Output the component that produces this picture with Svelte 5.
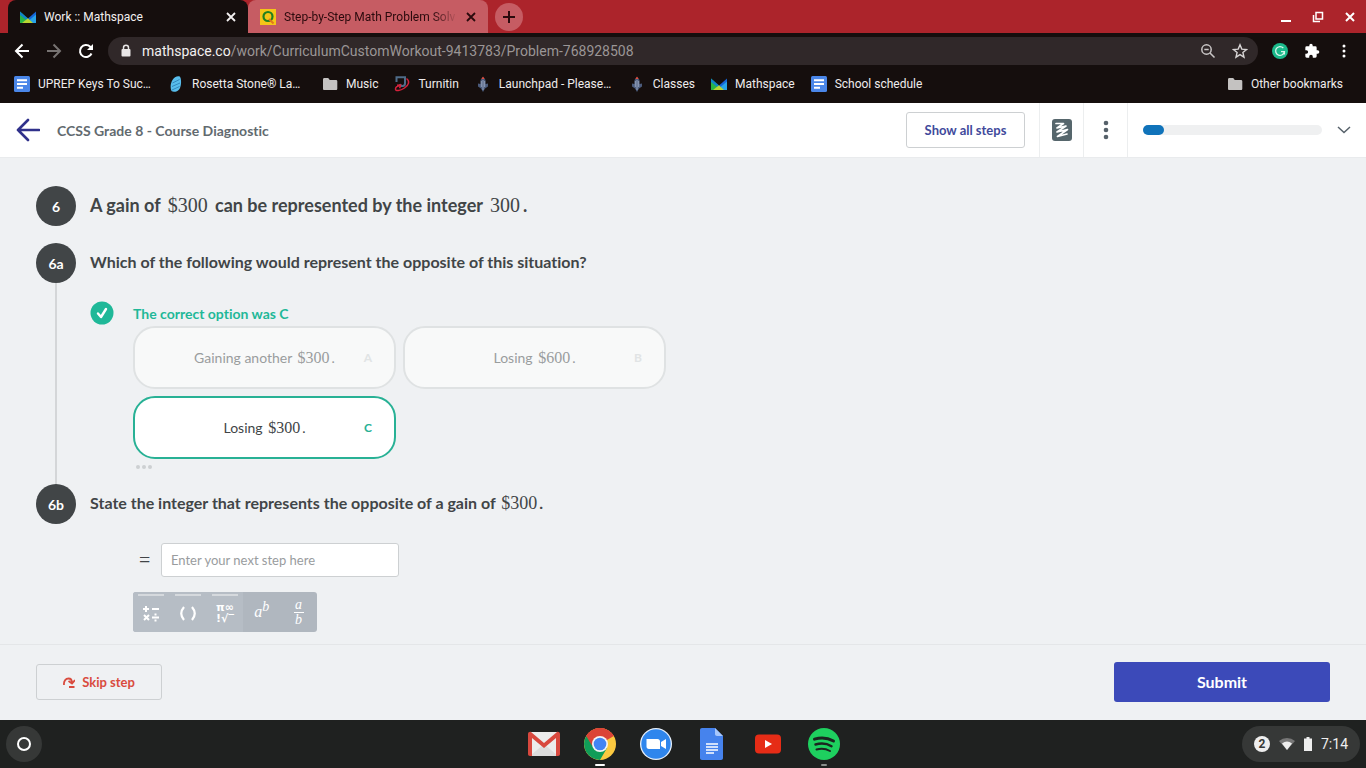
<script lang="ts">
	type IconName = 'docs' | 'rosetta' | 'folder' | 'turnitin' | 'rocket' | 'mathspace';

	interface Bookmark {
		icon: IconName;
		label: string;
		clipped?: boolean;
	}

	interface Option {
		letter: string;
		text: string;
		amount: string;
		correct: boolean;
	}

	const bookmarks: Bookmark[] = [
		{ icon: 'docs', label: 'UPREP Keys To Suc…', clipped: true },
		{ icon: 'rosetta', label: 'Rosetta Stone® La…', clipped: true },
		{ icon: 'folder', label: 'Music' },
		{ icon: 'turnitin', label: 'Turnitin' },
		{ icon: 'rocket', label: 'Launchpad - Please…', clipped: true },
		{ icon: 'rocket', label: 'Classes' },
		{ icon: 'mathspace', label: 'Mathspace' },
		{ icon: 'docs', label: 'School schedule' }
	];

	const options: Option[] = [
		{ letter: 'A', text: 'Gaining another', amount: '$300', correct: false },
		{ letter: 'B', text: 'Losing', amount: '$600', correct: false },
		{ letter: 'C', text: 'Losing', amount: '$300', correct: true }
	];

	let progress = $state(12);
	let answer = $state('');
</script>

{#snippet icon(name: IconName)}
	<svg class="icon16" viewBox="0 0 16 16" aria-hidden="true">
		{#if name === 'docs'}
			<rect width="16" height="16" rx="1.5" fill="#4a86e8" />
			<path d="M3 4.2h10M3 8h10M3 11.8h6" stroke="#fff" stroke-width="2" />
		{:else if name === 'rosetta'}
			<path d="M4.500 4C6 1 10-.5 12 .8c1.500 2 1.500 9-.5 12.200C9.500 16 5 16.500 3.500 15 2 12 2.500 7 4.500 4z" fill="#58bdec" />
			<path d="M4.500 7 11.500 3.500M4 10.500 12 7M4 14l7.500-3.500" stroke="#2878b0" stroke-width=".8" />
		{:else if name === 'folder'}
			<path d="M1 3.500C1 2.700 1.500 2 2.300 2h3.900l1.600 2H14c.8 0 1.300.600 1.300 1.300v7.400c0 .8-.5 1.300-1.300 1.300H2.300C1.500 14 1 13.500 1 12.700z" fill="#c4c2c1" />
		{:else if name === 'turnitin'}
			<path d="M2.500 6V1.200H11V7.500c0 3-4.500 3.500-5 .5" fill="none" stroke="#4f6c89" stroke-width="2" />
			<path d="M12.500 2.500c3.500 2.500 2.500 6.500-2 9.500-4.500 3-9 3.500-9 1 0-1.800 2-3 4.500-3.500M3 9.300l3.500-.3-.8 3.300" fill="none" stroke="#d5213b" stroke-width="1.500" />
		{:else if name === 'rocket'}
			<path d="M8 1 5.500 4v4L3 7.500v3l3 2L8 16l2-3.500 3-2v-3L10.500 8V4z" fill="#4b5b7c" />
			<path d="M6.300 3 8 .5 9.700 3z" fill="#e44c3d" />
			<path d="M8 4v10M6.300 5v6M9.700 5v6" stroke="#a6b3cc" stroke-width=".8" />
		{:else}
			<path d="M0 2.500 8 9.500 4.500 14H0z" fill="#16a34a" />
			<path d="M0 2.500 8 9.500 5.500 12 0 7z" fill="#1283c9" />
			<path d="M0 6v8h4.500L7 11.500z" fill="#28b446" />
			<path d="M16 2.500 8 9.500l4 4.500h4z" fill="#1565d8" />
			<path d="M16 5.500 9.500 11l3 3H16z" fill="#28a3e8" />
			<path d="M2 14 8 9.300l5 4.700z" fill="#b9d532" />
		{/if}
	</svg>
{/snippet}

{#snippet cross()}
	<svg class="cross" viewBox="0 0 10 10" aria-hidden="true">
		<path d="m1 1 8 8M9 1 1 9" fill="none" stroke="currentColor" stroke-width="1.800" />
	</svg>
{/snippet}

{#snippet math(value: string)}
	<span class="math">{value}</span>
{/snippet}

<div class="screen">
	<div class="tabs">
		<div class="tab active">
			{@render icon('mathspace')}
			<span class="tab-title">Work :: Mathspace</span>
			<button class="bare" aria-label="Close tab">{@render cross()}</button>
		</div>
		<div class="tab">
			<svg class="icon16" viewBox="0 0 16 16" aria-hidden="true">
				<rect width="16" height="16" fill="#f5c518" />
				<circle cx="8" cy="7.500" r="4.500" fill="none" stroke="#20801f" stroke-width="2.200" />
				<path d="m9 10 4.500 4.500" stroke="#e2771b" stroke-width="2" />
			</svg>
			<span class="tab-title faded">Step-by-Step Math Problem Solv</span>
			<button class="bare" aria-label="Close tab">{@render cross()}</button>
		</div>
		<button class="new-tab" aria-label="New tab">
			<svg width="12" height="12" viewBox="0 0 12 12"><path d="M6 0v12M0 6h12" stroke="currentColor" stroke-width="2" /></svg>
		</button>
		<div class="window-controls">
			<button class="bare" aria-label="Minimize">
				<svg width="12" height="12" viewBox="0 0 12 12"><path d="M1 10h10" stroke="#fff" stroke-width="2" /></svg>
			</button>
			<button class="bare" aria-label="Restore">
				<svg width="12" height="12" viewBox="0 0 12 12" fill="none" stroke="#fff" stroke-width="1.500"><path d="M4 1.500h6.500V8H4z" /><path d="M1.500 4v6.500H8" /></svg>
			</button>
			<button class="bare" aria-label="Close window">
				<svg width="12" height="12" viewBox="0 0 12 12"><path d="m2 2 8 8M10 2l-8 8" stroke="#fff" stroke-width="2" /></svg>
			</button>
		</div>
	</div>

	<div class="toolbar">
		<button class="bare" aria-label="Back">
			<svg width="16" height="16" viewBox="0 0 16 16" fill="none" stroke="#fff" stroke-width="2"><path d="M15 8H2M8.500 1.500 2 8l6.500 6.500" /></svg>
		</button>
		<button class="bare" aria-label="Forward">
			<svg width="16" height="16" viewBox="0 0 16 16" fill="none" stroke="#777372" stroke-width="2"><path d="M1 8h13M7.500 1.500 14 8l-6.500 6.500" /></svg>
		</button>
		<button class="bare" aria-label="Reload">
			<svg width="16" height="16" viewBox="0 0 16 16"><path d="M13.500 10.500A6 6 0 1 1 12.200 3.800L14 5.600" fill="none" stroke="#fff" stroke-width="2" /><path d="M15 1v6H9z" fill="#fff" /></svg>
		</button>
		<div class="omnibox">
			<svg width="12" height="14" viewBox="0 0 12 14"><path d="M3.500 6V3.700a2.500 2.500 0 0 1 5 0V6" fill="none" stroke="#e8e6e6" stroke-width="1.500" /><rect x="1.500" y="5" width="9" height="7.500" rx="1" fill="#e8e6e6" /></svg>
			<span class="url"><b>mathspace.co</b>/work/CurriculumCustomWorkout-9413783/Problem-768928508</span>
			<button class="bare" aria-label="Zoom">
				<svg width="16" height="16" viewBox="0 0 16 16" fill="none" stroke="#c9c6c6" stroke-width="1.500"><circle cx="6.500" cy="6.500" r="4.700" /><path d="m10 10 4.500 4.500M4.300 6.500h4.400" /></svg>
			</button>
			<button class="bare" aria-label="Bookmark this tab">
				<svg width="16" height="16" viewBox="0 0 16 16"><path d="m8 1.800 1.800 4.300 4.700.4-3.600 3 1.100 4.700-4-2.500-4 2.500 1.100-4.700-3.600-3 4.700-.4z" fill="none" stroke="#d8d5d5" stroke-width="1.400" /></svg>
			</button>
		</div>
		<button class="bare" aria-label="Grammarly">
			<svg width="16" height="16" viewBox="0 0 16 16"><circle cx="8" cy="8" r="8" fill="#1ab98a" /><path d="M11.300 5A4.400 4.400 0 1 0 12.400 8.600H9M12.400 8.600v3" fill="none" stroke="#d7f5ea" stroke-width="1.300" /></svg>
		</button>
		<button class="bare" aria-label="Extensions">
			<svg width="16" height="16" viewBox="0 0 24 24"><path d="M20.500 11H19V7a2 2 0 0 0-2-2h-4V3.500a2.500 2.500 0 0 0-5 0V5H4a2 2 0 0 0-2 2v3.800h1.500a2.700 2.700 0 0 1 0 5.400H2V20a2 2 0 0 0 2 2h3.800v-1.500a2.700 2.700 0 0 1 5.400 0V22H17a2 2 0 0 0 2-2v-4h1.500a2.500 2.500 0 0 0 0-5z" fill="#fff" /></svg>
		</button>
		<button class="bare" aria-label="Menu">
			<svg width="16" height="16" viewBox="0 0 16 16" fill="#fff"><circle cx="8" cy="3" r="1.500" /><circle cx="8" cy="8" r="1.500" /><circle cx="8" cy="13" r="1.500" /></svg>
		</button>
	</div>

	<nav class="bookmarks">
		{#each bookmarks as bookmark}
			<a href="#bookmark">
				{@render icon(bookmark.icon)}
				<span class:clipped={bookmark.clipped}>{bookmark.label}</span>
			</a>
		{/each}
		<a class="other" href="#bookmark">
			{@render icon('folder')}
			<span>Other bookmarks</span>
		</a>
	</nav>

	<header>
		<button class="bare back" aria-label="Back to course">
			<svg width="24" height="24" viewBox="0 0 24 24" fill="none" stroke="#30318b" stroke-width="2.600" stroke-linecap="round" stroke-linejoin="round"><path d="M23 12H2M12 2 2 12l10 10" /></svg>
		</button>
		<h1>CCSS Grade 8 - Course Diagnostic</h1>
		<button class="outline show-steps">Show all steps</button>
		<button class="cell" aria-label="Scratchpad">
			<svg width="22" height="24" viewBox="0 0 22 24"><rect x="1" y="1" width="20" height="22" rx="3" fill="#56666c" /><path d="M5 5.500 12.500 5.500 6 10 15 8 6 14 16.500 11.500 6.500 18.500 16 16" fill="none" stroke="#fff" stroke-width="1.700" stroke-linecap="round" stroke-linejoin="round" /></svg>
		</button>
		<button class="cell" aria-label="More">
			<svg width="6" height="20" viewBox="0 0 6 20" fill="#56616a"><circle cx="3" cy="3" r="2.300" /><circle cx="3" cy="10" r="2.300" /><circle cx="3" cy="17" r="2.300" /></svg>
		</button>
		<div class="progress-cell">
			<div class="track"><div class="fill" style="width: {progress}%"></div></div>
			<button class="bare" aria-label="Expand progress">
				<svg width="14" height="8" viewBox="0 0 14 8"><path d="m1 1 6 5.500L13 1" fill="none" stroke="#56616a" stroke-width="1.500" /></svg>
			</button>
		</div>
	</header>

	<main>
		<section class="step intro">
			<div class="rail"><span class="badge">6</span></div>
			<h2>A gain of {@render math('$300')} can be represented by the integer {@render math('300')}.</h2>
		</section>

		<section class="step">
			<div class="rail"><span class="badge">6a</span></div>
			<div>
				<h3>Which of the following would represent the opposite of this situation?</h3>
				<div class="result">
					<svg width="24" height="24" viewBox="0 0 24 24"><circle cx="12" cy="12" r="11.500" fill="#1fb898" /><path d="m8 12.500 3 3.500 5-8" fill="none" stroke="#fff" stroke-width="2.400" stroke-linecap="round" stroke-linejoin="round" /></svg>
					<span>The correct option was C</span>
				</div>
				<div class="options">
					{#each options as option (option.letter)}
						<button class="option" class:correct={option.correct}>
							<span class="option-text">{option.text} {@render math(option.amount)}.</span>
							<span class="letter">{option.letter}</span>
						</button>
					{/each}
				</div>
				<button class="bare dots" aria-label="More about this step"><i></i><i></i><i></i></button>
			</div>
		</section>

		<section class="step">
			<div class="rail"><span class="badge">6b</span></div>
			<div>
				<h3>State the integer that represents the opposite of a gain of {@render math('$300')}.</h3>
				<div class="entry">
					<label for="answer" aria-label="Answer">=</label>
					<input id="answer" type="text" placeholder="Enter your next step here" bind:value={answer} />
				</div>
				<div class="keypad">
					<button class="key group" aria-label="Operators">
						<svg width="18" height="18" viewBox="0 0 18 18" stroke="#fff" stroke-width="2" fill="none"><path d="M1 5h6M4 2v6M10 5h7M2 11l5 5M7 11l-5 5M10 13.500h7" /><path d="M12.500 10.500h2M12.500 16.500h2" /></svg>
					</button>
					<button class="key group" aria-label="Brackets">
						<svg width="18" height="18" viewBox="0 0 18 18" stroke="#fff" stroke-width="2.200" fill="none"><path d="M5 3Q-.5 9.500 5 16M13 3q5.500 6.500 0 13" /></svg>
					</button>
					<button class="key group symbols" aria-label="Symbols"><span>π∞</span><span>!√‾</span></button>
					<button class="key power"><span>a<sup>b</sup></span></button>
					<button class="key fraction"><span class="top">a</span><span>b</span></button>
				</div>
			</div>
		</section>
	</main>

	<footer>
		<button class="outline skip">
			<svg width="12" height="12" viewBox="0 0 12 12" fill="none" stroke="#d94b3e" stroke-width="1.800"><path d="M1 9C.5 4.500 3 2.500 5.500 2.500S9 4.500 9 7M5.500 5 9 7.500l3-3.500M6 11h5.500" /></svg>
			Skip step
		</button>
		<button class="submit">Submit</button>
	</footer>

	<div class="shelf">
		<button class="launcher" aria-label="Launcher"><i></i></button>
		<div class="apps">
			<button class="bare" aria-label="Gmail">
				<svg width="34" height="34" viewBox="0 0 34 34"><path d="M3 5h28v24H3z" fill="#ececec" /><path d="m3 29 14-12 14 12z" fill="#dcdcdc" /><path d="M1 7c0-2 2-2.500 3-2l13 11L30 5c1-.5 3 0 3 2v20c0 1.300-.7 2-2 2h-2V11L17 21 5 11v18H3c-1.300 0-2-.7-2-2z" fill="#d8483e" /></svg>
			</button>
			<button class="bare running" aria-label="Chrome">
				<svg width="34" height="34" viewBox="0 0 34 34"><circle cx="17" cy="17" r="16" fill="#fbc940" /><path d="M17 17 3.200 9A16 16 0 0 1 30.800 9z" fill="#db4437" /><path d="M3.200 9A16 16 0 0 0 17 33l7-12-7-4z" fill="#109d58" /><path d="M17 9h13.800A16 16 0 0 0 3.200 9l6 10z" fill="#db4437" /><circle cx="17" cy="17" r="8" fill="#f4f4f4" /><circle cx="17" cy="17" r="6.300" fill="#4285f4" /></svg>
			</button>
			<button class="bare" aria-label="Zoom">
				<svg width="34" height="34" viewBox="0 0 34 34"><circle cx="17" cy="17" r="16" fill="#e8f1fc" /><circle cx="17" cy="17" r="14.700" fill="#2f86ed" /><path d="M7.500 12h11c1.600 0 2.500 1 2.500 2.500V22H10c-1.600 0-2.500-1-2.500-2.500zM22 15l5-3v10l-5-3z" fill="#fff" /></svg>
			</button>
			<button class="bare" aria-label="Docs">
				<svg width="34" height="34" viewBox="0 0 34 34"><path d="M7 1h13l8 8v22c0 1.200-.8 2-2 2H7c-1.200 0-2-.8-2-2V3c0-1.200.8-2 2-2z" fill="#4683ed" /><path d="M20 1v6c0 1.200.8 2 2 2h6z" fill="#a8c7fb" /><path d="M11 17h12M11 20h12M11 23h12M11 26h8" stroke="#fff" stroke-width="1.500" /></svg>
			</button>
			<button class="bare" aria-label="YouTube">
				<svg width="34" height="34" viewBox="0 0 34 34"><rect x="4" y="7.500" width="26" height="19" rx="4" fill="#e62c16" /><path d="m14 13 7 4-7 4z" fill="#fff" /></svg>
			</button>
			<button class="bare running dim" aria-label="Spotify">
				<svg width="34" height="34" viewBox="0 0 34 34"><circle cx="17" cy="17" r="16" fill="#1ed05f" /><g fill="none" stroke="#1b2420" stroke-linecap="round"><path d="M7.500 12.200c6-2 13.500-1.300 19 1.800" stroke-width="3" /><path d="M8.500 17.500c5.500-1.600 11.500-1 16 1.700" stroke-width="2.500" /><path d="M9.500 22.500c4.500-1.300 9.500-.8 13.500 1.500" stroke-width="2" /></g></svg>
			</button>
		</div>
		<button class="tray">
			<span class="count">2</span>
			<svg width="16" height="14" viewBox="0 0 16 14"><path d="M0 4a12 12 0 0 1 16 0l-8 9z" fill="#777" /><path d="M3 6.500a8 8 0 0 1 10 0L8 13z" fill="#eee" /></svg>
			<svg width="8" height="14" viewBox="0 0 8 14"><path d="M2.500 0h3v1.500H8V14H0V1.500h2.500z" fill="#eee" /></svg>
			<span>7:14</span>
		</button>
	</div>
</div>

<style>
	:global(body) {
		margin: 0;
	}

	.screen {
		display: flex;
		flex-direction: column;
		min-height: 100vh;
		background: #eff1f3;
		color: #414547;
		font-family: Lato, sans-serif;
		font-variant-ligatures: none;
	}

	.screen * {
		box-sizing: border-box;
	}

	button {
		font: inherit;
		color: inherit;
		padding: 0;
		cursor: pointer;
	}

	svg {
		display: block;
		flex: none;
	}

	.bare {
		border: 0;
		background: none;
	}

	.icon16 {
		width: 16px;
		height: 16px;
	}

	.cross {
		width: 10px;
		height: 10px;
	}

	/* browser chrome */
	.tabs {
		display: flex;
		height: 33px;
		padding-left: 8px;
		background: #ac242b;
		font: 12px Roboto, sans-serif;
	}

	.tab {
		display: flex;
		align-items: center;
		width: 240px;
		padding: 0 12px;
		gap: 8px;
		border-radius: 8px 8px 0 0;
		background: #c65c63;
		color: #2b0a0d;
	}

	.tab.active {
		background: #150e0d;
		color: #f3f0f0;
	}

	.tab-title {
		flex: 1;
		white-space: nowrap;
	}

	.faded {
		mask-image: linear-gradient(to right, #000 85%, transparent);
	}

	.new-tab {
		display: grid;
		place-items: center;
		align-self: center;
		width: 28px;
		height: 28px;
		margin-left: 7px;
		border: 0;
		border-radius: 50%;
		background: #c65c63;
		color: #2b0a0d;
	}

	.window-controls {
		display: flex;
		align-items: center;
		gap: 20px;
		margin-left: auto;
		padding-right: 10px;
	}

	.toolbar {
		display: flex;
		align-items: center;
		gap: 16px;
		height: 36px;
		padding: 0 14px;
		background: #150e0d;
	}

	.omnibox {
		flex: 1;
		display: flex;
		align-items: center;
		gap: 16px;
		height: 28px;
		margin: 0 -2px;
		padding: 0 10px 0 12px;
		border-radius: 14px;
		background: #302829;
		color: #9b9696;
		font: 14px Roboto, sans-serif;
	}

	.url {
		flex: 1;
		margin-left: -6px;
	}

	.url b {
		color: #f3f0f0;
		font-weight: 400;
	}

	.bookmarks {
		display: flex;
		align-items: center;
		gap: 16px;
		height: 34px;
		padding: 0 23px 4px 14px;
		background: #150e0d;
		font: 12px Roboto, sans-serif;
	}

	.bookmarks a {
		display: flex;
		align-items: center;
		gap: 8px;
		color: #efecec;
		text-decoration: none;
		white-space: nowrap;
	}

	.clipped {
		width: 114px;
	}

	.bookmarks .other {
		margin-left: auto;
	}

	/* page header */
	header {
		display: flex;
		align-items: center;
		height: 55px;
		padding-left: 16px;
		border-bottom: 1px solid #e9ebed;
		background: #fff;
	}

	h1 {
		flex: 1;
		margin: 0 0 0 17px;
		color: #626a6f;
		font-size: 14px;
		font-weight: 700;
	}

	.outline {
		height: 36px;
		border: 1px solid #cdd0d2;
		border-radius: 3px;
		background: transparent;
		font-size: 13px;
		font-weight: 700;
		line-height: 16px;
	}

	.show-steps {
		width: 119px;
		margin-right: 14px;
		color: #3f4a9c;
	}

	.cell {
		display: grid;
		place-items: center;
		align-self: stretch;
		width: 44px;
		border: 0;
		border-left: 1px solid #eceeef;
		background: none;
	}

	.progress-cell {
		display: flex;
		align-items: center;
		align-self: stretch;
		gap: 15px;
		width: 239px;
		padding: 0 15px;
		border-left: 1px solid #eceeef;
	}

	.track {
		flex: 1;
		height: 10px;
		border-radius: 5px;
		background: #eff0f1;
	}

	.fill {
		height: 10px;
		border-radius: 5px;
		background: #1073ba;
	}

	/* problem steps */
	main {
		flex: 1;
		padding: 28px 36px 12px;
	}

	.step {
		display: grid;
		grid-template-columns: 40px 1fr;
		column-gap: 14px;
	}

	.intro {
		margin-bottom: 17px;
	}

	.rail {
		display: flex;
		flex-direction: column;
		align-items: center;
	}

	.step:nth-child(2) .rail::after {
		content: '';
		flex: 1;
		width: 2px;
		background: #d4d6d8;
	}

	.badge {
		display: grid;
		place-items: center;
		width: 40px;
		height: 40px;
		border-radius: 50%;
		background: #414547;
		color: #fff;
		font-size: 14px;
		font-weight: 700;
	}

	h2,
	h3 {
		margin: 0;
		padding-bottom: 2px;
		font-size: 16px;
		font-weight: 700;
		line-height: 38px;
	}

	h2 {
		font-size: 18px;
	}

	.math {
		margin: 0 2px;
		font-family: 'Liberation Serif', serif;
		font-size: 18px;
		font-weight: 400;
		line-height: 1;
	}

	h2 .math {
		margin: 0 3px;
		font-size: 20px;
	}

	.result {
		display: flex;
		align-items: center;
		gap: 19px;
		height: 26px;
		margin-top: 17px;
		color: #1fb898;
		font-size: 14px;
		font-weight: 700;
	}

	.options {
		display: grid;
		grid-template-columns: repeat(2, 263px);
		gap: 7px;
		margin-left: 43px;
	}

	.option {
		display: grid;
		grid-template-columns: 1fr auto 1fr;
		align-items: center;
		height: 63px;
		padding: 0 22px;
		border: 2px solid #dfe2e3;
		border-radius: 22px;
		background: #f8f9f9;
		color: #9a9d9e;
		font-size: 14px;
	}

	.option.correct {
		border-color: #28b195;
		background: #fff;
		color: #414547;
	}

	.option-text {
		grid-column: 2;
	}

	.option .math {
		font-size: 16px;
	}

	.letter {
		justify-self: end;
		color: #e1e4e5;
		font-size: 12px;
		font-weight: 700;
	}

	.correct .letter {
		color: #28b195;
	}

	.dots {
		display: flex;
		align-items: center;
		gap: 2px;
		height: 16px;
		margin: 0 0 9px 46px;
	}

	.dots i {
		width: 4px;
		height: 4px;
		border-radius: 50%;
		background: #cdd0d2;
	}

	.entry {
		display: flex;
		align-items: center;
		gap: 10px;
		margin: 19px 0 15px 49px;
	}

	.entry label {
		width: 12px;
		font-family: 'Liberation Serif', serif;
		font-size: 20px;
		line-height: 1;
	}

	input {
		width: 238px;
		height: 34px;
		padding: 0 9px;
		border: 1px solid #cdd0d2;
		border-radius: 3px;
		background: #fff;
		color: #414547;
		font: 13px Lato, sans-serif;
	}

	input::placeholder {
		color: #999c9e;
	}

	.keypad {
		display: grid;
		grid-template-columns: repeat(5, 1fr);
		width: 184px;
		height: 40px;
		margin-left: 43px;
		border-radius: 3px;
		background: #b0b7bf;
		overflow: hidden;
	}

	.key {
		display: flex;
		flex-direction: column;
		align-items: center;
		justify-content: center;
		border: 0;
		background: none;
		color: #fff;
		font-family: 'Liberation Serif', serif;
		font-style: italic;
		font-size: 14px;
		line-height: 1;
	}

	.group {
		padding-top: 2px;
		background: linear-gradient(#d5d9dd, #d5d9dd) 50% 2px / 26px 2px no-repeat #b6bdc5;
	}

	.symbols {
		font-family: 'DejaVu Sans', sans-serif;
		font-style: normal;
		font-size: 11px;
		font-weight: 700;
	}

	.power {
		font-size: 16px;
	}

	.power sup {
		font-size: 14px;
		line-height: 0;
	}

	.top {
		width: 10px;
		border-bottom: 1px solid #fff;
	}

	footer {
		display: flex;
		align-items: center;
		justify-content: space-between;
		height: 76px;
		padding: 0 36px 2px;
		border-top: 1px solid #e4e6e8;
	}

	.skip {
		display: flex;
		align-items: center;
		justify-content: center;
		gap: 7px;
		width: 126px;
		color: #d94b3e;
	}

	.submit {
		width: 216px;
		height: 40px;
		border: 0;
		border-radius: 3px;
		background: #3c4ab9;
		color: #fff;
		font-size: 16px;
		font-weight: 700;
	}

	/* system shelf */
	.shelf {
		display: grid;
		grid-template-columns: 1fr auto 1fr;
		align-items: center;
		height: 48px;
		padding: 0 6px;
		background: #1f2120;
	}

	.launcher {
		display: grid;
		place-items: center;
		width: 36px;
		height: 36px;
		border: 0;
		border-radius: 50%;
		background: #363837;
	}

	.launcher i {
		width: 14px;
		height: 14px;
		border: 2px solid #fff;
		border-radius: 50%;
	}

	.apps {
		display: flex;
		gap: 22px;
		padding-left: 2px;
	}

	.apps button {
		position: relative;
	}

	.running::after {
		content: '';
		position: absolute;
		bottom: -5px;
		left: 12px;
		width: 10px;
		height: 2px;
		border-radius: 1px;
		background: #fff;
	}

	.running.dim::after {
		left: 14px;
		width: 6px;
		background: #8a8f8c;
	}

	.tray {
		display: flex;
		align-items: center;
		justify-self: end;
		gap: 9px;
		height: 36px;
		padding: 0 12px;
		border: 0;
		border-radius: 18px;
		background: #363837;
		color: #eee;
		font: 14px Roboto, sans-serif;
	}

	.count {
		width: 16px;
		height: 16px;
		border-radius: 50%;
		background: #eee;
		color: #363837;
		font-size: 12px;
		font-weight: 700;
		line-height: 16px;
	}
</style>
